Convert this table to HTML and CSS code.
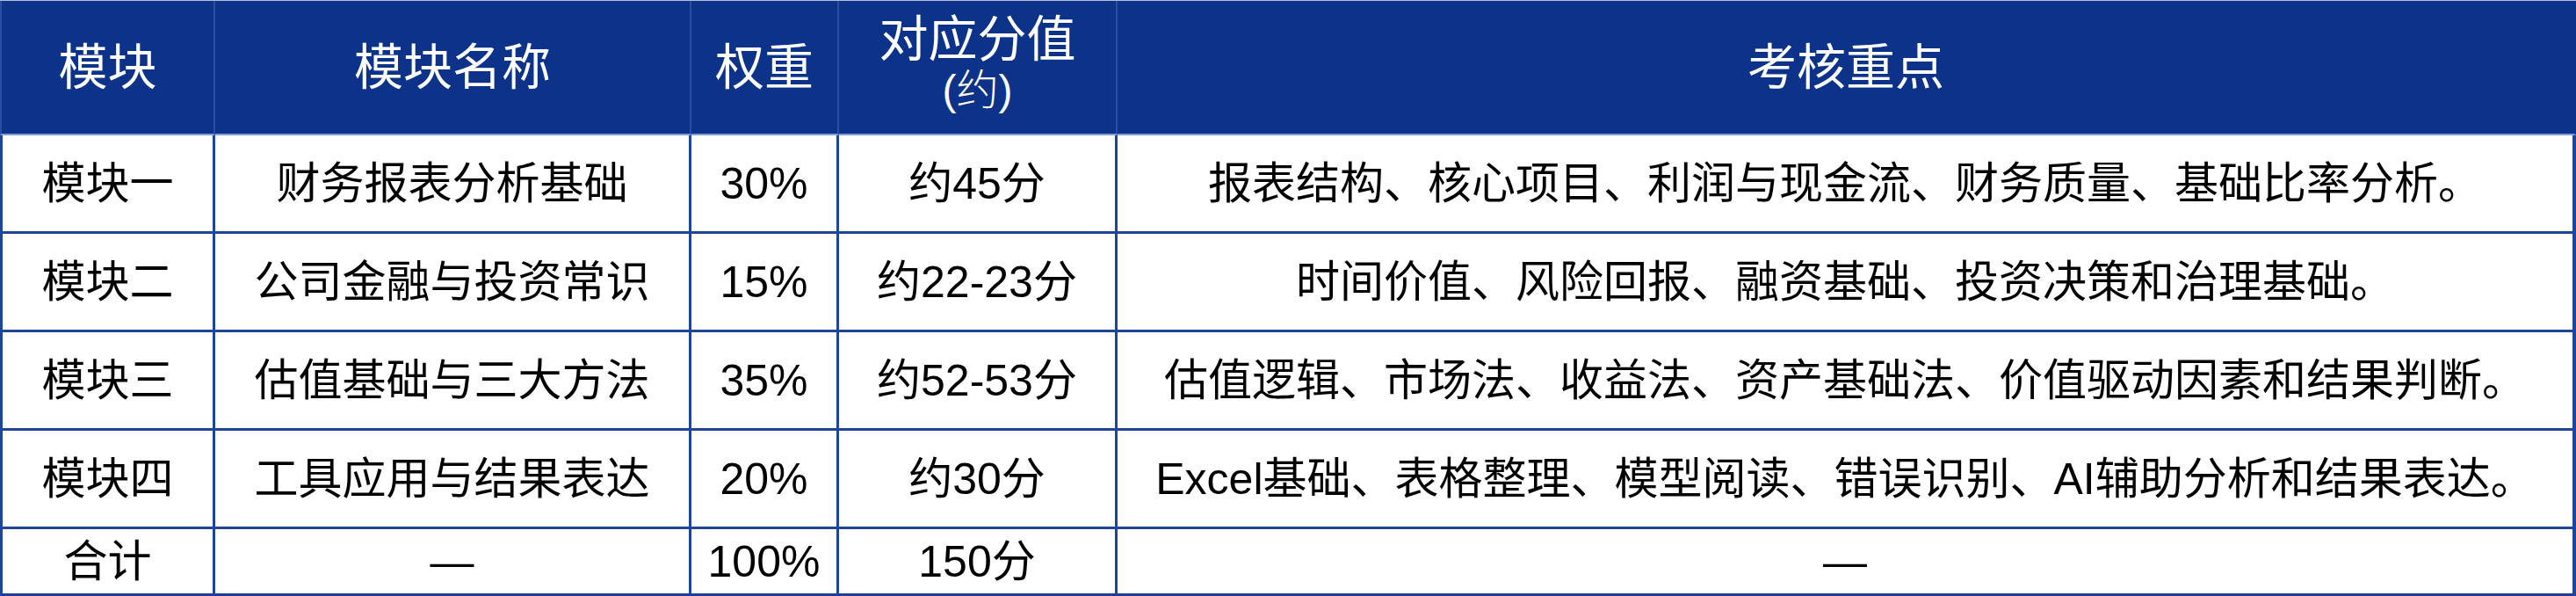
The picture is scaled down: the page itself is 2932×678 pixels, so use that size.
FILE: index.html
```html
<!DOCTYPE html>
<html lang="zh-CN">
<head>
<meta charset="utf-8">
<title>模块权重</title>
<link rel="stylesheet" href="styles.css">
</head>
<body>
<table class="grid">
  <colgroup>
    <col class="c-mod">
    <col class="c-name">
    <col class="c-weight">
    <col class="c-score">
    <col class="c-focus">
  </colgroup>
  <thead>
    <tr>
      <th>模块</th>
      <th>模块名称</th>
      <th>权重</th>
      <th class="two-line"><span class="main">对应分值</span><span class="sub">(约)</span></th>
      <th>考核重点</th>
    </tr>
  </thead>
  <tbody>
    <tr>
      <td>模块一</td>
      <td>财务报表分析基础</td>
      <td>30%</td>
      <td>约45分</td>
      <td>报表结构、核心项目、利润与现金流、财务质量、基础比率分析。</td>
    </tr>
    <tr>
      <td>模块二</td>
      <td>公司金融与投资常识</td>
      <td>15%</td>
      <td>约22-23分</td>
      <td>时间价值、风险回报、融资基础、投资决策和治理基础。</td>
    </tr>
    <tr>
      <td>模块三</td>
      <td>估值基础与三大方法</td>
      <td>35%</td>
      <td>约52-53分</td>
      <td>估值逻辑、市场法、收益法、资产基础法、价值驱动因素和结果判断。</td>
    </tr>
    <tr>
      <td>模块四</td>
      <td>工具应用与结果表达</td>
      <td>20%</td>
      <td>约30分</td>
      <td>Excel基础、表格整理、模型阅读、错误识别、AI辅助分析和结果表达。</td>
    </tr>
    <tr class="total">
      <td>合计</td>
      <td>—</td>
      <td>100%</td>
      <td>150分</td>
      <td>—</td>
    </tr>
  </tbody>
</table>
</body>
</html>
```

FILE: styles.css
```css
html, body {
  margin: 0;
  padding: 0;
  background: #ffffff;
}

body {
  font-family: "Liberation Sans", "Noto Sans CJK SC", sans-serif;
  color: #000000;
}

.grid {
  width: 2932px;
  border-collapse: separate;
  border-spacing: 0;
  table-layout: fixed;
  border-top: 1px solid #b3bfdc;
}

.c-mod { width: 245px; }
.c-name { width: 542px; }
.c-weight { width: 168px; }
.c-score { width: 317px; }
.c-focus { width: auto; }

.grid th {
  height: 151px;
  padding: 0;
  background: #0c3389;
  color: #ffffff;
  font-weight: normal;
  font-size: 56px;
  line-height: 1.2;
  text-align: center;
  vertical-align: middle;
  border-right: 2px solid #2a4c9f;
  border-bottom: 2px solid #7f9dd6;
}

.grid th:first-child {
  border-left: 2px solid #2a4c9f;
}

.grid th:last-child {
  border-right: 2px solid #0c3389;
}

.two-line .main,
.two-line .sub {
  display: block;
}

.two-line .main {
  line-height: 62px;
  margin-top: -10px;
}

.two-line .sub {
  font-size: 48px;
  line-height: 54px;
  font-weight: 300;
}

.grid td {
  height: 109px;
  padding: 0;
  font-size: 50px;
  line-height: 1.2;
  text-align: center;
  vertical-align: middle;
  white-space: nowrap;
  border-right: 3px solid #1f4599;
  border-bottom: 3px solid #1f4599;
}

.grid td:first-child {
  border-left: 3px solid #1f4599;
}

.grid td:last-child {
  border-right: 4px solid #1f4599;
}

.grid .total td {
  height: 73px;
  border-bottom: 3px solid #1c3f95;
}
```
